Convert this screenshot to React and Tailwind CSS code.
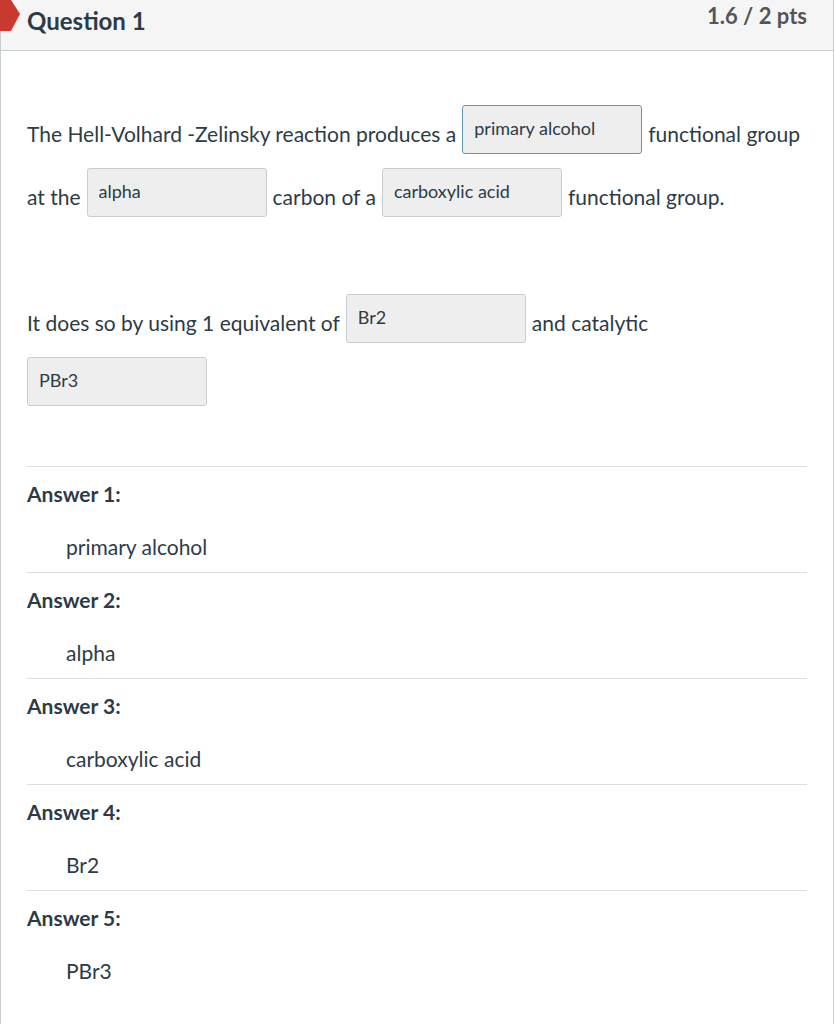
import React from 'react';

const Blank = ({ value, focused }) => (
  <span
    className={`inline-block w-[180px] h-[49px] shrink-0 rounded-[3px] border bg-[#eeeeee] px-[11px] pt-[10px] text-[18px] leading-[24px] text-[#2d3b45] ${
      focused ? 'border-[#5d9bb5]' : 'border-[#c7cdd1]'
    }`}
  >
    {value}
  </span>
);

const Words = ({ children }) => <span className="mb-[8px] whitespace-nowrap">{children}</span>;

const answers = ['primary alcohol', 'alpha', 'carboxylic acid', 'Br2', 'PBr3'];

export default function App() {
  return (
    <div className="min-h-[1024px] w-[835px] bg-white" style={{ fontFamily: 'Lato, "Open Sans", sans-serif' }}>
      <div className="relative mr-[1px] min-h-[1024px] w-[834px] border-x border-[#c7cdd1] text-[#2d3b45]">
        {/* Header */}
        <div className="flex h-[51px] items-start justify-between border-b border-[#c7cdd1] bg-[#f5f5f5] pl-[26px] pr-[26px]">
          <h2 className="pt-[6px] text-[24px] font-bold leading-[30px] text-[#2d3b45]">Question 1</h2>
          <div className="pt-[2px] text-[22px] font-bold leading-[28px] text-[#555555]">1.6 / 2 pts</div>
        </div>
        <svg className="absolute left-[-1px] top-0" width="21" height="32" viewBox="0 0 21 32">
          <polygon points="0,0 11,0 20,14 11,31 0,31" fill="#c83a30" />
        </svg>

        {/* Question text */}
        <div className="px-[26px] pt-[54px] text-[21px] leading-[24px]">
          <div className="flex flex-col gap-[14px]">
            <div className="flex items-end gap-[6px]">
              <Words>The Hell-Volhard -Zelinsky reaction produces a</Words>
              <Blank value="primary alcohol" focused />
              <Words>functional group</Words>
            </div>
            <div className="flex items-end gap-[6px]">
              <Words>at the</Words>
              <Blank value="alpha" />
              <Words>carbon of a</Words>
              <Blank value="carboxylic acid" />
              <Words>functional group.</Words>
            </div>
            <div className="h-[49px]" />
            <div className="flex items-end gap-[6px]">
              <Words>It does so by using 1 equivalent of</Words>
              <Blank value="Br2" />
              <Words>and catalytic</Words>
            </div>
            <div className="flex items-end gap-[6px]">
              <Blank value="PBr3" />
            </div>
          </div>
        </div>

        {/* Answers */}
        <div className="mx-[26px] mt-[60px]">
          {answers.map((a, i) => (
            <div key={i} className="h-[106px] border-t border-[#dddddd]">
              <div className="pt-[15px] text-[21px] font-bold leading-[24px]">Answer {i + 1}:</div>
              <div className="pl-[39px] pt-[29px] text-[21px] leading-[24px]">{a}</div>
            </div>
          ))}
        </div>
      </div>
    </div>
  );
}
